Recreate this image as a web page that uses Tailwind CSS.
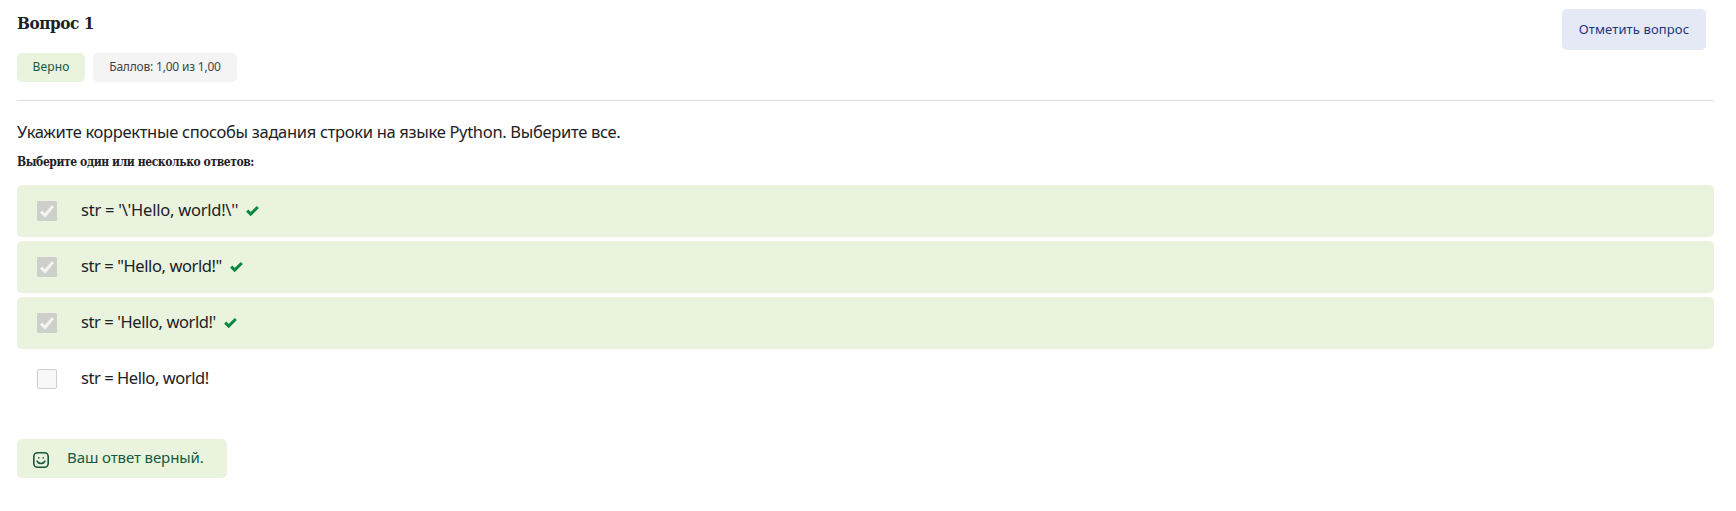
<!DOCTYPE html>
<html lang="ru">
<head>
<meta charset="utf-8">
<title>Вопрос 1</title>
<script src="https://cdn.jsdelivr.net/npm/@tailwindcss/browser@4"></script>
</head>
<body class="h-[511px] overflow-hidden bg-white pl-[17px] pr-[22px] font-['Noto_Sans',sans-serif] text-[#1d2125]">
<header class="flex h-[101px] items-start justify-between border-b border-[#dedfe3] pr-2 pt-[9px]">
  <div>
    <h3 class="h-[44px] font-['DejaVu_Serif_Condensed','DejaVu_Serif',serif] text-[17px] font-bold leading-[28px] tracking-[-0.45px] whitespace-nowrap"><span>Вопрос 1</span></h3>
    <div class="flex gap-2 text-[12px] leading-[28px] whitespace-nowrap">
      <div class="h-[29px] w-[68px] rounded-[5px] bg-[#e9f3dd] text-center tracking-[0.15px] text-[#18593d]"><span>Верно</span></div>
      <div class="h-[29px] w-[144px] rounded-[5px] bg-[#f4f4f4] text-center tracking-[-0.2px] text-[#444]"><span>Баллов: 1,00 из 1,00</span></div>
    </div>
  </div>
  <button class="h-[41px] w-[144px] rounded-[5px] bg-[#e5e9f5] text-[13px] tracking-[0.12px] text-[#1d3680] whitespace-nowrap"><span>Отметить вопрос</span></button>
</header>
<main>
  <p class="pt-[19px] text-[16.5px] leading-[24px] tracking-[-0.31px] whitespace-nowrap"><span>Укажите корректные способы задания строки на языке Python. Выберите все.</span></p>
  <h4 class="h-[41px] pt-2 font-['DejaVu_Serif_Condensed','DejaVu_Serif',serif] text-[12px] font-bold leading-[20px] tracking-[-0.42px] whitespace-nowrap"><span>Выберите один или несколько ответов:</span></h4>
  <div class="flex flex-col gap-1 text-[16.5px] leading-[24px] whitespace-nowrap">
    <div class="flex h-[52px] items-center rounded-[5px] bg-[#e9f3dd] pl-5">
      <svg class="mr-6 size-5" viewBox="0 0 20 20"><rect width="20" height="20" rx="1.5" fill="#cccfca"/><path d="M4 10.5 8 14.5 16 5" fill="none" stroke="#f3f4f2" stroke-width="3"/></svg>
      <span class="-mt-0.5 tracking-[-0.24px]">str = '\'Hello, world!\''</span>
      <svg class="-mt-px ml-2 size-[13px]" viewBox="0 0 13 13"><path d="M1.2 6.6 4.7 10.1 11.8 3" fill="none" stroke="#07873f" stroke-width="3"/></svg>
    </div>
    <div class="flex h-[52px] items-center rounded-[5px] bg-[#e9f3dd] pl-5">
      <svg class="mr-6 size-5" viewBox="0 0 20 20"><rect width="20" height="20" rx="1.5" fill="#cccfca"/><path d="M4 10.5 8 14.5 16 5" fill="none" stroke="#f3f4f2" stroke-width="3"/></svg>
      <span class="-mt-0.5 tracking-[-0.41px]">str = "Hello, world!"</span>
      <svg class="-mt-px ml-2 size-[13px]" viewBox="0 0 13 13"><path d="M1.2 6.6 4.7 10.1 11.8 3" fill="none" stroke="#07873f" stroke-width="3"/></svg>
    </div>
    <div class="flex h-[52px] items-center rounded-[5px] bg-[#e9f3dd] pl-5">
      <svg class="mr-6 size-5" viewBox="0 0 20 20"><rect width="20" height="20" rx="1.5" fill="#cccfca"/><path d="M4 10.5 8 14.5 16 5" fill="none" stroke="#f3f4f2" stroke-width="3"/></svg>
      <span class="-mt-0.5 tracking-[-0.41px]">str = 'Hello, world!'</span>
      <svg class="-mt-px ml-2 size-[13px]" viewBox="0 0 13 13"><path d="M1.2 6.6 4.7 10.1 11.8 3" fill="none" stroke="#07873f" stroke-width="3"/></svg>
    </div>
    <div class="flex h-[52px] items-center pl-5">
      <div class="mr-6 size-5 rounded-[2px] border border-[#cfcfcf] bg-[#f8f8f8]"></div>
      <span class="-mt-0.5 tracking-[-0.44px]">str = Hello, world!</span>
    </div>
  </div>
  <div class="mt-[34px] flex h-[39px] w-[210px] rounded-[5px] bg-[#e9f3dd] pl-4 text-[15px] leading-[37px] tracking-[-0.1px] text-[#18593d] whitespace-nowrap">
    <svg class="mr-[18px] mt-[13px] size-4" viewBox="0 0 16 16" fill="none" stroke="#18593d" stroke-width="1.6" stroke-linecap="round"><rect x=".8" y=".8" width="14.4" height="14.4" rx="3.8"/><path d="M4 9.2c1.5 3 6.5 3 8 0M5.8 5.9v.1M10.2 5.9v.1"/></svg>
    <span>Ваш ответ верный.</span>
  </div>
</main>
</body>
</html>
